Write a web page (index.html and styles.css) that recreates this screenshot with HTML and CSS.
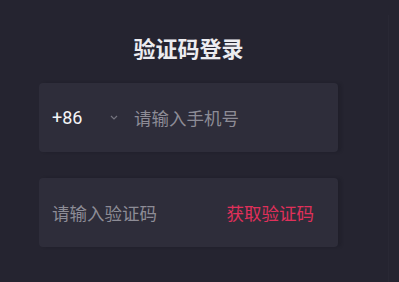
FILE: index.html
```html
<!DOCTYPE html>
<html lang="zh-CN">
<head>
<meta charset="utf-8">
<title>验证码登录</title>
<link rel="stylesheet" href="styles.css">
</head>
<body>
<div class="page">
  <main class="panel">
    <h1 class="title">验证码登录</h1>
    <div class="field">
      <div class="area">
        <span class="code">+86</span>
        <svg class="chev" width="8" height="5" viewBox="0 0 8 5"><path d="M1 1l3 3 3-3" fill="none" stroke="#74737e" stroke-width="1.2"/></svg>
      </div>
      <span class="placeholder">请输入手机号</span>
    </div>
    <div class="field field-code">
      <span class="placeholder">请输入验证码</span>
      <span class="send">获取验证码</span>
    </div>
  </main>
  <div class="divider"></div>
</div>
</body>
</html>
```

FILE: styles.css
```css
html, body {
  margin: 0;
  padding: 0;
  background: #252430;
  height: 100%;
}
body {
  font-family: "Noto Sans CJK SC", "Noto Sans", sans-serif;
  overflow: hidden;
}
.page {
  display: flex;
  height: 282px;
}
.panel {
  width: 388px;
  display: flex;
  flex-direction: column;
  align-items: flex-start;
  padding-left: 39px;
  box-sizing: border-box;
}
.divider {
  width: 1px;
  margin-top: 15px;
  background: #292834;
}
.title {
  width: 299px;
  margin: 32px 0 21px;
  text-align: center;
  font-size: 22px;
  line-height: 30px;
  font-weight: 700;
  color: #ececf0;
}
.field {
  width: 299px;
  height: 69px;
  box-sizing: border-box;
  padding: 0 24px 0 13px;
  background: #2e2d3a;
  border-radius: 4px;
  display: flex;
  align-items: center;
  box-shadow: 3px 0 3px rgba(20, 20, 28, 0.25);
}
.field-code {
  margin-top: 26px;
  justify-content: space-between;
}
.area {
  display: flex;
  align-items: center;
  width: 82px;
}
.code {
  font-family: Roboto, "Liberation Sans", sans-serif;
  font-size: 18px;
  font-weight: 400;
  color: #f4f4f7;
  width: 58px;
}
.chev {
  display: block;
}
.placeholder {
  font-size: 17.5px;
  color: #8d8c96;
}
.send {
  font-size: 17.5px;
  color: #e0305a;
}
```
